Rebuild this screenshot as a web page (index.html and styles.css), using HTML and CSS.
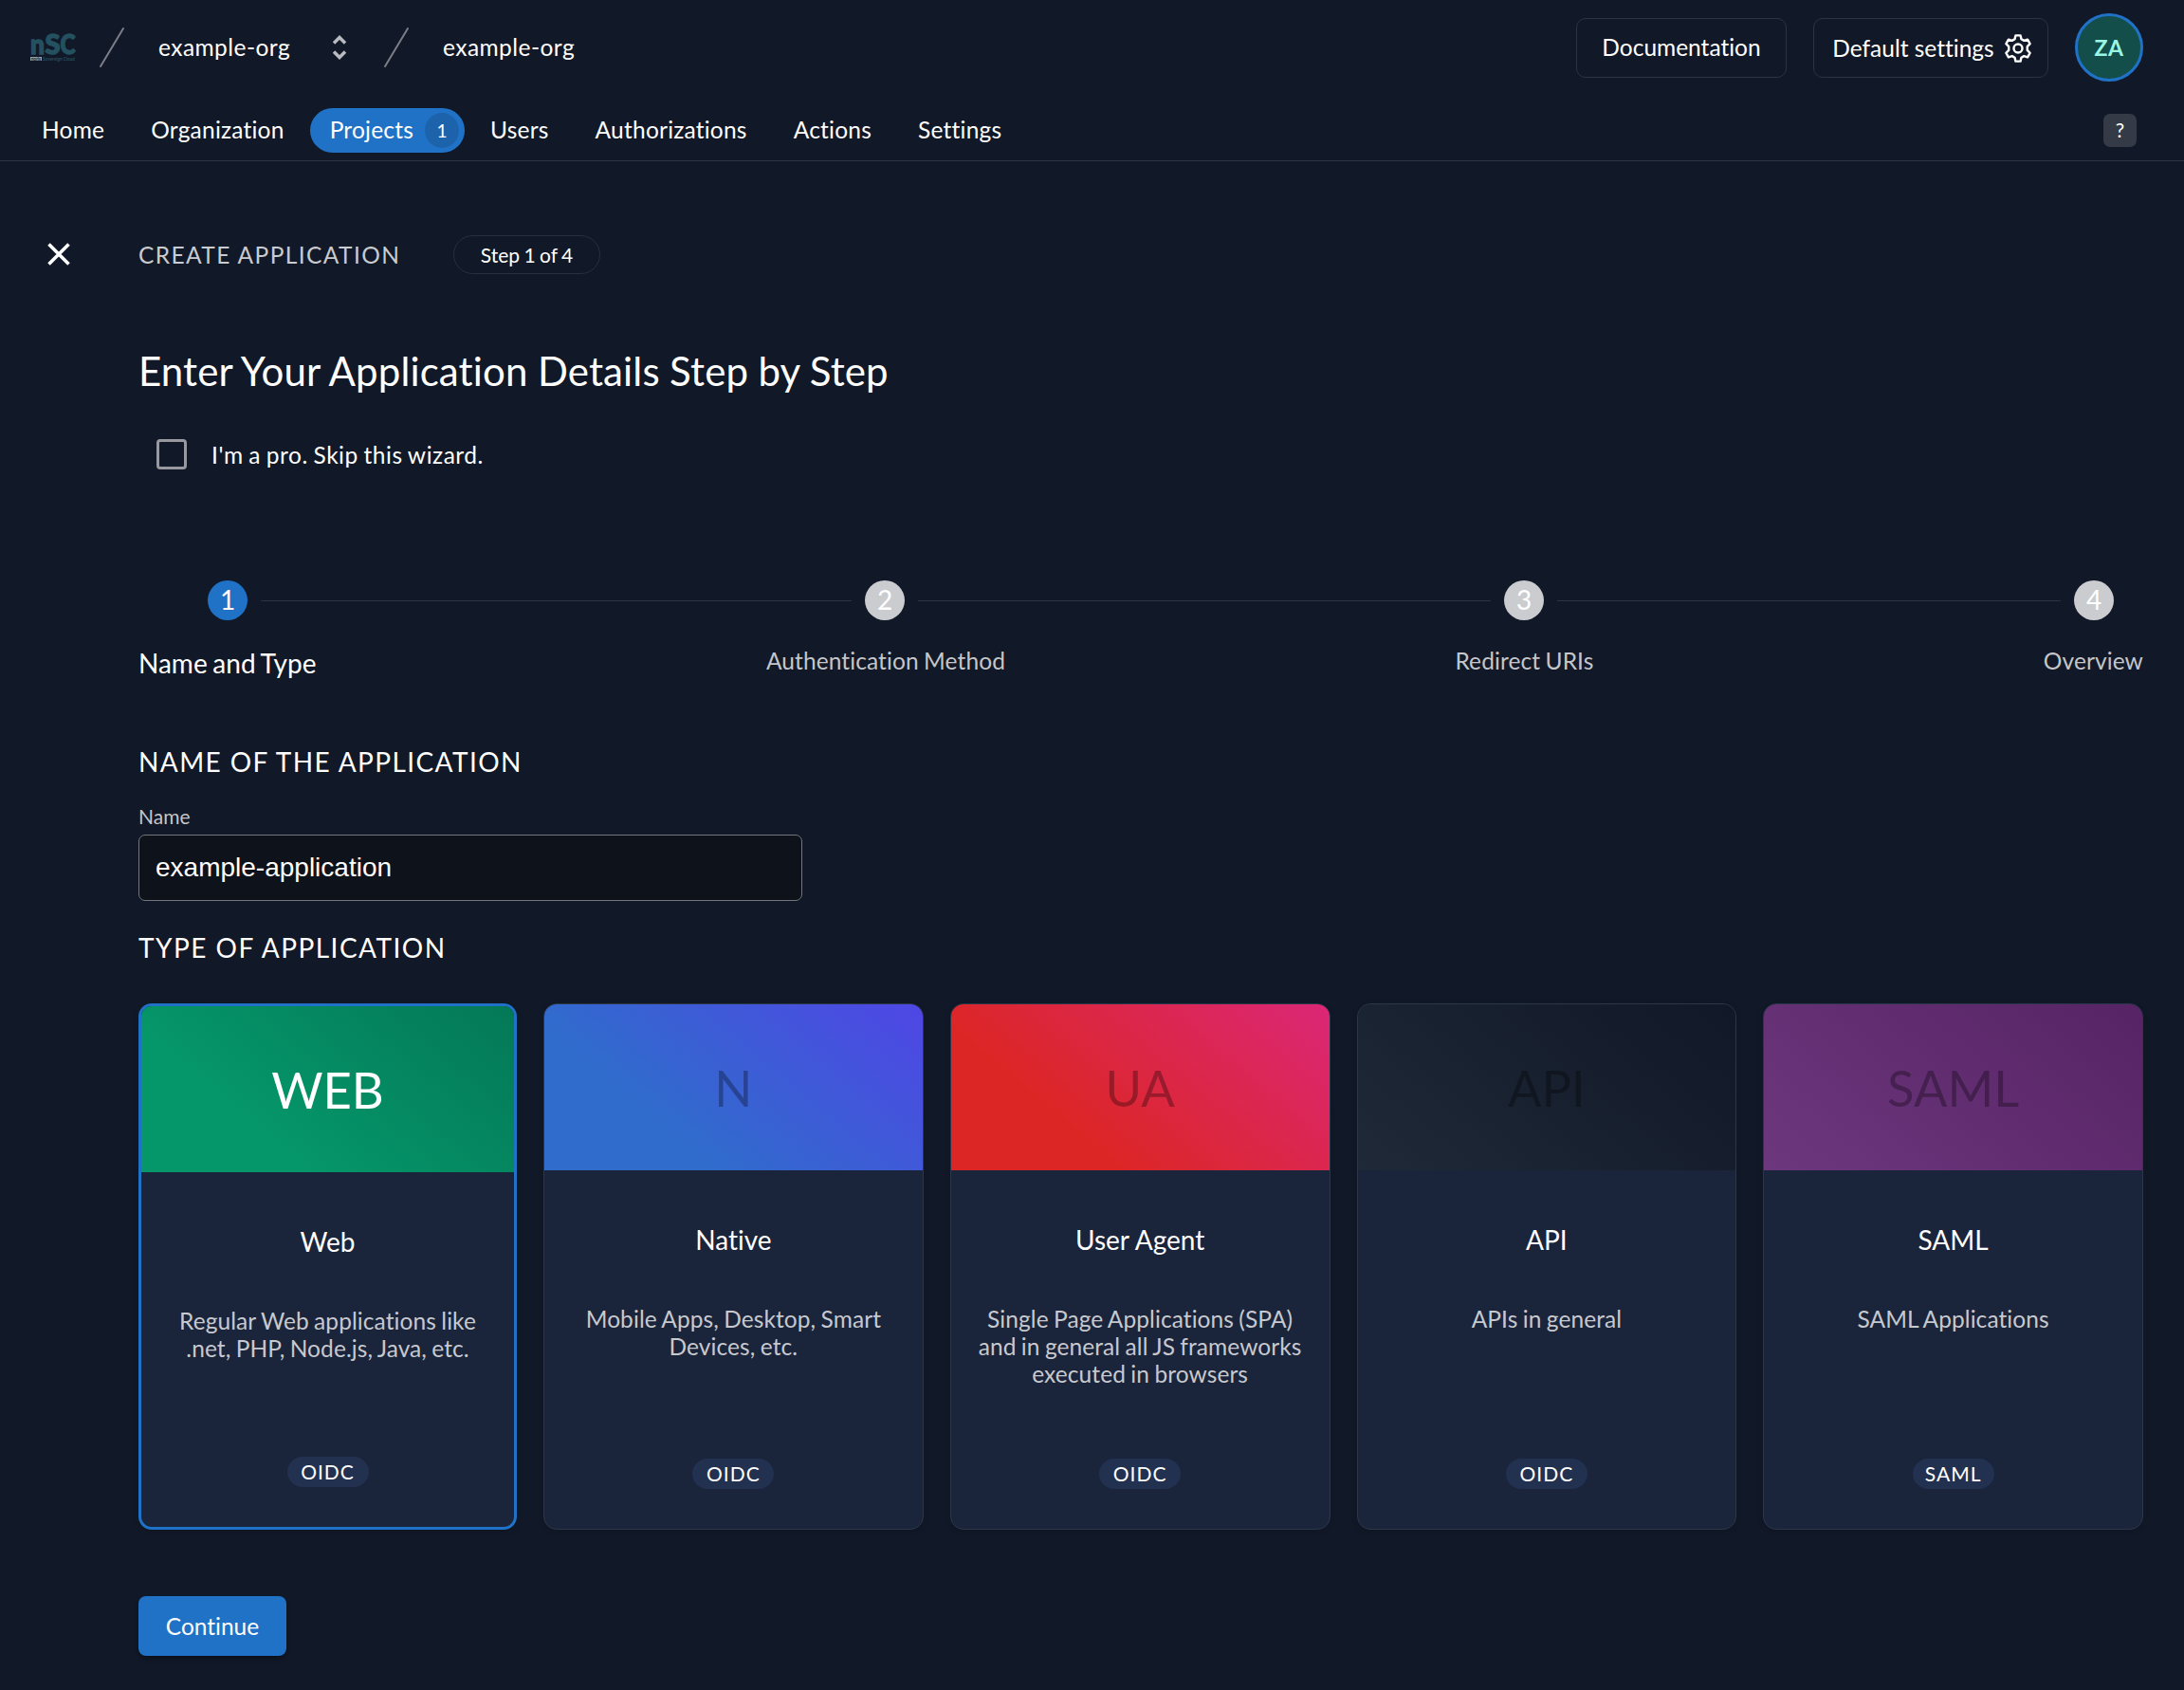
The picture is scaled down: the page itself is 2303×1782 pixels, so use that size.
FILE: index.html
```html
<!DOCTYPE html>
<html lang="en">
<head>
<meta charset="utf-8">
<title>Create Application</title>
<link rel="stylesheet" href="styles.css">
</head>
<body>
<header class="header">
  <div class="topbar">
    <svg class="logo" width="48" height="44" viewBox="0 -6 48 44">
      <g class="logo-main"><text x="0" y="22.500" textLength="15" lengthAdjust="spacingAndGlyphs" font-size="29">n</text><text x="15.500" y="22.500" textLength="16" lengthAdjust="spacingAndGlyphs" font-size="29">S</text><text x="31.500" y="22.500" textLength="16" lengthAdjust="spacingAndGlyphs" font-size="29">C</text></g>
      <rect x="0" y="26" width="12" height="4" fill="#8fa3ab"/>
      <text class="logo-noris" x="1" y="29.500" textLength="10" lengthAdjust="spacingAndGlyphs">noris</text>
      <text class="logo-sub" x="13" y="29.500" textLength="34" lengthAdjust="spacingAndGlyphs">Sovereign Cloud</text>
    </svg>
    <svg class="slash" width="28" height="44" viewBox="0 0 28 44"><path d="M2 42 26 2"/></svg>
    <span class="crumb">example-org</span>
    <svg class="updown" width="18" height="28" viewBox="0 0 18 28"><path d="M3 9.500 9 3.500 15 9.500M3 18.500 9 24.500 15 18.500"/></svg>
    <svg class="slash slash-second" width="28" height="44" viewBox="0 0 28 44"><path d="M2 42 26 2"/></svg>
    <span class="crumb">example-org</span>
    <div class="top-actions">
      <a class="outline-btn docs">Documentation</a>
      <a class="outline-btn defaults">Default settings
        <svg class="gear" width="36" height="36" viewBox="0 0 24 24"><path d="M10.300 2.900h3.400l.6 2.600 1.900 1.100 2.500-.8 1.700 3-1.900 1.900v2.600l1.900 1.900-1.700 3-2.500-.8-1.900 1.100-.6 2.600h-3.400l-.6-2.600-1.900-1.100-2.500.8-1.700-3 1.900-1.900v-2.600l-1.900-1.900 1.700-3 2.500.8 1.900-1.100z"/><circle cx="12" cy="12" r="3"/></svg>
      </a>
      <div class="avatar">ZA</div>
    </div>
  </div>
  <nav class="nav">
    <a class="nav-item">Home</a>
    <a class="nav-item">Organization</a>
    <a class="nav-item active">Projects<span class="count">1</span></a>
    <a class="nav-item">Users</a>
    <a class="nav-item">Authorizations</a>
    <a class="nav-item">Actions</a>
    <a class="nav-item">Settings</a>
    <span class="help">?</span>
  </nav>
</header>
<main class="page">
  <div class="title-row">
    <svg class="close" width="26" height="28" viewBox="0 0 26 28"><path d="M2.500 2.500 23.500 23.500M23.500 2.500 2.500 23.500"/></svg>
    <span class="page-kind">CREATE APPLICATION</span>
    <span class="step-pill">Step 1 of 4</span>
  </div>
  <div class="content">
    <h1 class="heading">Enter Your Application Details Step by Step</h1>
    <label class="pro"><span class="checkbox"></span><span class="pro-text">I'm a pro. Skip this wizard.</span></label>
    <div class="track">
      <span class="dot current">1</span><i class="line"></i><span class="dot">2</span><i class="line"></i><span class="dot">3</span><i class="line"></i><span class="dot">4</span>
    </div>
    <div class="step-labels">
      <span class="step-label current">Name and Type</span><span class="step-label">Authentication Method</span><span class="step-label">Redirect URIs</span><span class="step-label">Overview</span>
    </div>
    <h2 class="section name-section">NAME OF THE APPLICATION</h2>
    <div class="field-label">Name</div>
    <div class="input">example-application</div>
    <h2 class="section type-section">TYPE OF APPLICATION</h2>
    <div class="cards">
      <div class="card selected"><div class="card-top web">WEB</div><div class="card-name">Web</div><div class="card-desc">Regular Web applications like .net, PHP, Node.js, Java, etc.</div><span class="proto">OIDC</span></div>
      <div class="card"><div class="card-top native">N</div><div class="card-name">Native</div><div class="card-desc">Mobile Apps, Desktop, Smart Devices, etc.</div><span class="proto">OIDC</span></div>
      <div class="card"><div class="card-top agent">UA</div><div class="card-name">User Agent</div><div class="card-desc">Single Page Applications (SPA) and in general all JS frameworks executed in browsers</div><span class="proto">OIDC</span></div>
      <div class="card"><div class="card-top api">API</div><div class="card-name">API</div><div class="card-desc">APIs in general</div><span class="proto">OIDC</span></div>
      <div class="card"><div class="card-top saml">SAML</div><div class="card-name">SAML</div><div class="card-desc">SAML Applications</div><span class="proto">SAML</span></div>
    </div>
    <button class="continue">Continue</button>
  </div>
</main>
</body>
</html>
```
FILE: styles.css
```css
* { box-sizing: border-box; }
body {
  margin: 0;
  height: 1782px;
  overflow: hidden;
  background: #111827;
  color: #fff;
  font-family: Lato, sans-serif;
  font-size: 24.5px;
  font-variant-ligatures: none;
  line-height: 1.2;
}
svg { display: block; flex: none; }
h1, h2 { margin: 0; font-weight: 400; }

.header { height: 170px; border-bottom: 1px solid #2c3341; }
.topbar { display: flex; align-items: center; height: 100px; padding: 0 43px 0 32px; }
.logo { overflow: visible; }
.logo-main { fill: #245160; stroke: #245160; stroke-width: 1.4; font-family: Lato, sans-serif; font-weight: 900; }
.logo-noris, .logo-sub { font-family: Lato, sans-serif; font-weight: 700; font-size: 5px; }
.logo-noris { fill: #111827; }
.logo-sub { fill: #245160; }
.slash { margin-left: 24px; fill: none; stroke: #7b7e87; stroke-width: 2; stroke-linecap: round; }
.slash-second { margin-left: 37px; }
.crumb { margin-left: 35px; width: 139px; white-space: nowrap; letter-spacing: .45px; }
.updown { margin-left: 43px; fill: none; stroke: #b9bbc0; stroke-width: 3.5; }
.top-actions { display: flex; align-items: center; gap: 28px; margin-left: auto; }
.outline-btn { display: flex; align-items: center; justify-content: center; height: 63px; border: 1px solid #2c3341; border-radius: 10px; white-space: nowrap; }
.docs { width: 222px; }
.defaults { width: 248px; gap: 7px; padding-top: 1px; }
.gear { margin-right: -6px; fill: none; stroke: #fff; stroke-width: 1.6; stroke-linejoin: round; }
.avatar { display: flex; align-items: center; justify-content: center; width: 72px; height: 72px; border: 3px solid #2072c6; border-radius: 50%; background: #134e4a; color: #99f6e4; font-weight: 700; font-size: 23px; letter-spacing: .6px; padding-top: 1px; }

.nav { display: flex; align-items: center; height: 74px; padding: 0 50px 0 22px; gap: 5px; letter-spacing: .22px; }
.nav-item { display: flex; align-items: center; height: 47px; padding: 0 22px; white-space: nowrap; }
.nav-item.active { padding: 0 6px 0 21px; border-radius: 24px; background: #2072c6; }
.count { display: flex; align-items: center; justify-content: center; width: 36px; height: 37px; margin-left: 12px; padding-top: 2px; border-radius: 50%; background: #1c63ab; font-size: 19px; }
.help { display: flex; align-items: center; justify-content: center; width: 35px; height: 35px; margin-left: auto; border-radius: 7px; background: #353a47; font-size: 21px; }

.page { padding: 78px 43px 0 49px; }
.title-row { display: flex; align-items: center; height: 41px; }
.close { fill: none; stroke: #fff; stroke-width: 3.6; }
.page-kind { margin-left: 71px; width: 277px; color: #c9cbcf; letter-spacing: 1.4px; white-space: nowrap; }
.step-pill { display: flex; align-items: center; justify-content: center; margin-left: 55px; width: 155px; height: 41px; border: 1px solid #263140; border-radius: 21px; font-size: 21px; word-spacing: -1px; }
.content { padding-left: 97px; }
.heading { margin-top: 77px; font-size: 42px; line-height: 50px; letter-spacing: .15px; word-spacing: -.6px; }
.pro { display: flex; align-items: center; height: 32px; margin-top: 47px; padding-left: 19px; }
.checkbox { width: 32px; height: 32px; border: 3px solid #97999f; border-radius: 4px; }
.pro-text { margin-left: 26px; padding-top: 2px; letter-spacing: .52px; word-spacing: -1px; }

.track { display: grid; grid-template-columns: 42px 623fr 42px 604fr 42px 531fr 42px; gap: 14px; align-items: center; margin-top: 117px; padding: 0 31px 0 73px; }
.dot { display: flex; align-items: center; justify-content: center; height: 42px; border-radius: 50%; background: #cbccd0; font-size: 28px; }
.dot.current { background: #2072c6; }
.line { height: 1px; background: #2c3341; }
.step-labels { display: flex; justify-content: space-between; align-items: flex-start; margin-top: 28px; height: 34px; }
.step-label { color: #c4c6ca; letter-spacing: .1px; word-spacing: -1px; }
.step-label.current { padding-top: 1px; color: #fff; font-size: 28px; letter-spacing: 0; word-spacing: -1.5px; }

.section { font-size: 28px; line-height: 34px; letter-spacing: 1.4px; }
.name-section { margin-top: 70px; }
.field-label { margin-top: 28px; font-size: 21px; line-height: 25px; color: #c4c6ca; }
.input { display: flex; align-items: center; width: 700px; height: 70px; margin-top: 7px; padding-left: 17px; border: 1px solid #73767d; border-radius: 7px; background: #0e121b; font-family: "Liberation Sans", Arial, sans-serif; font-size: 28px; }
.type-section { margin-top: 32px; letter-spacing: 1.47px; }

.cards { display: grid; grid-template-columns: 399px repeat(4, 1fr); gap: 28px; margin-top: 42px; }
.card { display: flex; flex-direction: column; align-items: center; height: 555px; border: 1px solid #2c374a; border-radius: 14px; background: #1a243b; overflow: hidden; text-align: center; box-shadow: 0 2px 6px rgba(0, 0, 0, .12); }
.card.selected { border: 3px solid #2072c6; }
.card-top { display: flex; flex: none; align-items: center; justify-content: center; align-self: stretch; height: 175px; font-size: 52.5px; color: rgba(0, 0, 0, .3); }
.web { background: linear-gradient(40deg, #059669 30%, #047857); color: #fff; }
.native { background: linear-gradient(40deg, #306ccc 30%, #4f46e5); }
.agent { background: linear-gradient(40deg, #dc2626 30%, #db2777); }
.api { background: linear-gradient(40deg, #1f2937, #111827); }
.saml { background: linear-gradient(40deg, #6d377d, #562465); }
.card-name { margin-top: 56px; font-size: 28px; line-height: 34px; }
.card-desc { flex: 1; margin-top: 52px; padding: 0 24px; line-height: 29px; color: #c7c9ce; letter-spacing: .08px; word-spacing: -1px; }
.proto { display: flex; align-items: center; justify-content: center; min-width: 86px; height: 32px; margin-bottom: 42px; padding: 0 13px; border-radius: 16px; background: #233150; font-size: 21px; letter-spacing: 1px; }

.continue { display: flex; align-items: center; justify-content: center; width: 156px; height: 63px; margin-top: 70px; padding: 0; border: 0; border-radius: 8px; background: #2072c6; color: #fff; font: inherit; box-shadow: 0 3px 5px rgba(0, 0, 0, .3); }
```
